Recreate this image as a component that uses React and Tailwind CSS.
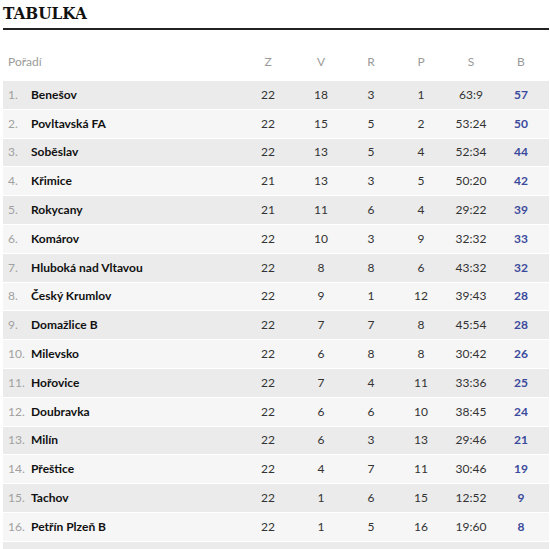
import React from 'react';

const rows = [
    ['Benešov', 22, 18, 3, 1, '63:9', 57],
    ['Povltavská FA', 22, 15, 5, 2, '53:24', 50],
    ['Soběslav', 22, 13, 5, 4, '52:34', 44],
    ['Křimice', 21, 13, 3, 5, '50:20', 42],
    ['Rokycany', 21, 11, 6, 4, '29:22', 39],
    ['Komárov', 22, 10, 3, 9, '32:32', 33],
    ['Hluboká nad Vltavou', 22, 8, 8, 6, '43:32', 32],
    ['Český Krumlov', 22, 9, 1, 12, '39:43', 28],
    ['Domažlice B', 22, 7, 7, 8, '45:54', 28],
    ['Milevsko', 22, 6, 8, 8, '30:42', 26],
    ['Hořovice', 22, 7, 4, 11, '33:36', 25],
    ['Doubravka', 22, 6, 6, 10, '38:45', 24],
    ['Milín', 22, 6, 3, 13, '29:46', 21],
    ['Přeštice', 22, 4, 7, 11, '30:46', 19],
    ['Tachov', 22, 1, 6, 15, '12:52', 9],
    ['Petřín Plzeň B', 22, 1, 5, 16, '19:60', 8],
];

const cols = ['V', 'R', 'P', 'S', 'B'];

const App = () => {
    return (
        <div className="w-[550px] h-[549px] overflow-hidden bg-white font-['Lato',sans-serif] text-[12px]">
            {/* Title */}
            <div className="pl-[3px] pt-[1px] h-[28px] font-['DejaVu_Serif_Condensed','DejaVu_Serif',serif] font-bold text-[17px] leading-[24px] text-[#111]">
                TABULKA
            </div>
            <div className="ml-[3px] mr-[1px] h-[2px] bg-[#222]"></div>

            <div className="ml-[3px] mr-[1px] mt-[18px]">
                {/* Header */}
                <div className="flex items-center h-[33px] pb-[5px] pr-[3px] text-[#9a9a9a]">
                    <div className="pl-[5px] flex-1">Pořadí</div>
                    <div className="w-[56px] text-center">Z</div>
                    {cols.map(c => (
                        <div key={c} className="w-[50px] text-center">{c}</div>
                    ))}
                </div>

                {/* Rows */}
                {rows.map((r, i) => (
                    <div
                        key={i}
                        className={`flex items-center h-[28.8px] pr-[3px] border-b border-white ${i % 2 === 0 ? 'bg-[#ebebeb]' : 'bg-[#f6f6f6]'}`}
                    >
                        <div className="pl-[5px] w-[28px] text-[#a0a0a0]">{i + 1}.</div>
                        <div className="flex-1 font-bold text-[#111]">{r[0]}</div>
                        <div className="w-[56px] text-center text-[#333]">{r[1]}</div>
                        {r.slice(2, 6).map((v, j) => (
                            <div key={j} className="w-[50px] text-center text-[#333]">{v}</div>
                        ))}
                        <div className="w-[50px] text-center font-bold text-[#3b4a9c]">{r[6]}</div>
                    </div>
                ))}
                <div className="h-[20px] bg-[#ebebeb]"></div>
            </div>
        </div>
    );
};

export default App;
